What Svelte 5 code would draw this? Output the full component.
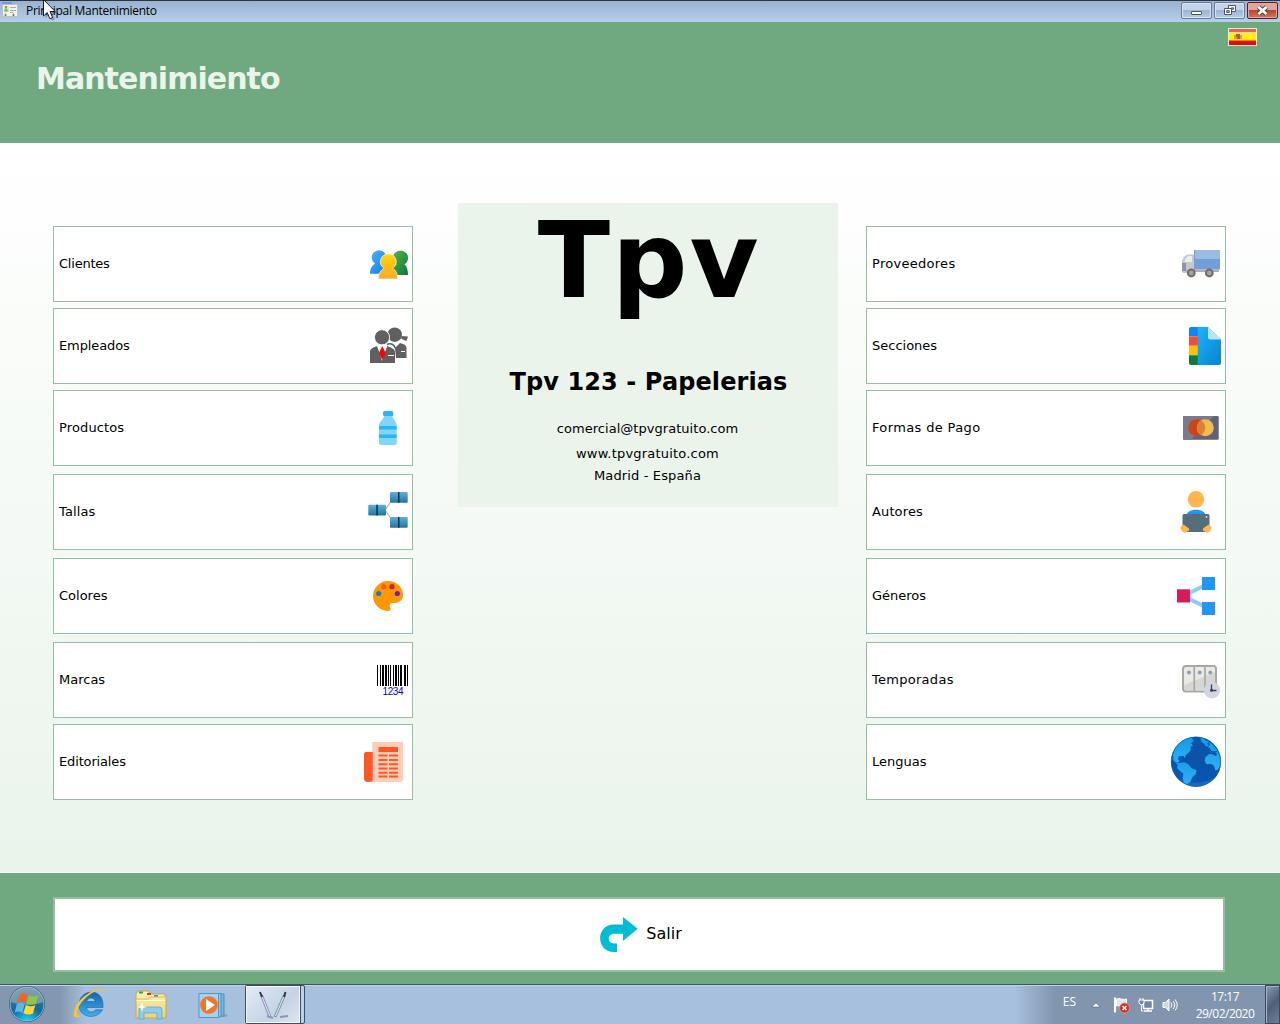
<script>
  const left = [
    { id: 'clientes', label: 'Clientes' },
    { id: 'empleados', label: 'Empleados' },
    { id: 'productos', label: 'Productos' },
    { id: 'tallas', label: 'Tallas' },
    { id: 'colores', label: 'Colores' },
    { id: 'marcas', label: 'Marcas' },
    { id: 'editoriales', label: 'Editoriales' }
  ];
  const right = [
    { id: 'proveedores', label: 'Proveedores' },
    { id: 'secciones', label: 'Secciones' },
    { id: 'pago', label: 'Formas de Pago' },
    { id: 'autores', label: 'Autores' },
    { id: 'generos', label: 'Géneros' },
    { id: 'temporadas', label: 'Temporadas' },
    { id: 'lenguas', label: 'Lenguas' }
  ];
  // [x, width] of each barcode stripe
  const bars = [[21, 1], [24, 1], [26, 2], [29, 2], [32, 1], [34, 1], [37, 1], [39, 2], [42, 1], [44, 2], [48, 2], [51, 1]];
</script>

{#snippet icon(id)}
  <svg class="icon" viewBox="0 0 56 74" width="56" height="74" aria-hidden="true">
    {#if id === 'clientes'}
      <path d="M14 46.700c0-5 2-8.500 5-10a7.300 7.300 0 1 1 8 0c3 1 5 5 5 10z" fill="url(#gBlue)" />
      <path d="M35 48c0-6 2-9 5.500-10.500a7.600 7.600 0 1 1 8 0C51 39 52 43 52 48z" fill="url(#gGreen)" />
      <path d="M22.500 52c0-6 2-8.500 5.500-10.500a8 8 0 1 1 8.500 0c4 2 5 5 5 10.500z" fill="url(#gYellow)" stroke="#fff" stroke-width=".6" />
    {:else if id === 'empleados'}
      <g fill="#606060">
        <circle cx="38.700" cy="25.700" r="7.300" />
        <path d="M45 27l7 .5-1.500 4.500-5-2zM39 39l5-5 3 1c2.500 1 3.500 2 3.500 4v10H40z" />
        <circle cx="26" cy="28.300" r="7.600" stroke="#fff" />
        <path d="M14 54V43c0-3 2-4 7-6l5 13 5-13c5 2 8 3 8 6v11z" />
      </g>
      <path d="M31 35.500c4-2 7 0 8.500 4" fill="none" stroke="#606060" stroke-width="1.500" />
      <path d="M21.500 37l4.500 15 5-15z" fill="#fff" />
      <path d="M26.300 37l3.400 7-3.400 7-3.400-7z" fill="#f00" />
      <path d="M32 46.500h6M45 42.500h4" stroke="#fff" />
    {:else if id === 'productos'}
      <path d="M28 24h8.500v2l4.200 7v18.500a2.500 2.500 0 0 1-2.500 2.500H25.500a2.500 2.500 0 0 1-2.500-2.500V33l5-7z" fill="#81d4fa" />
      <path d="M23 35h17.700v3.500H23zM23 43.500h17.700V47H23z" fill="#29b6f6" />
      <rect x="27" y="20" width="10.300" height="5" rx="1.500" fill="#29b6f6" />
    {:else if id === 'tallas'}
      <path d="M36 25l-7 10 7 10" fill="none" stroke="#bbb" stroke-width="1.300" />
      {#each [[12.3, 29.7], [34, 17], [34, 42]] as [x, y]}
        <rect {x} {y} width="17.700" height="10.700" rx="1" fill="url(#gBox)" />
        <rect x={x + 8} {y} width="1.500" height="10.700" fill="#0b3244" />
      {/each}
    {:else if id === 'colores'}
      <path d="M32 22a15 15 0 1 0 0 30c2 0 3-1 2.500-3-2-3 0-5 3-5 5 0 9.500-2.500 9.500-8C47 28 40 22 32 22z" fill="#ff9800" />
      <circle cx="27.700" cy="27.700" r="2.600" fill="#ff5722" />
      <circle cx="36" cy="27.700" r="2.600" fill="#c62828" />
      <circle cx="22.700" cy="34.500" r="2.600" fill="#1976d2" />
      <circle cx="41.300" cy="34.500" r="2.600" fill="#7b1fa2" />
    {:else if id === 'marcas'}
      {#each bars as [x, w]}
        <rect {x} y="22" width={w} height="21" />
      {/each}
      <text class="digits" x="26.500" y="52" textLength="21">1234</text>
    {:else if id === 'editoriales'}
      <path d="M16.300 17H47v37a3 3 0 0 1-3 3H12l4.300-3z" fill="#ffccbc" />
      <path d="M10 27h6.700v26.500a4.300 3.500 0 0 1-8.700 0V29a2 2 0 0 1 2-2z" fill="#ff5722" />
      <rect x="22.500" y="22" width="19.500" height="5" fill="#ff5722" />
      <path d="M22.500 30.500h9M33 30.500h9M22.500 35h9M33 35h9M22.500 39.200h9M33 39.200h9M22.500 43.500h9M33 43.500h9M22.500 47.700h9M33 47.700h9M22.500 51.500h9M33 51.500h9" stroke="#ff5722" stroke-width="2" />
    {:else if id === 'proveedores'}
      <path d="M13 45V34q2-6 6-6.500h6V46H14z" fill="#c3c9d3" />
      <path d="M15.500 35q1-5 4-6h3.500v6z" fill="#e9eeee" />
      <path d="M13 36h4v8h-4z" fill="#8c949d" />
      <path d="M25 23h26v9H25z" fill="#9bbbe3" />
      <path d="M25 32h26v10.500H25z" fill="#739fd8" />
      <path d="M17 42.500h33V45H17z" fill="#a9afbb" />
      <path d="M25.500 23v20" stroke="#7e9cc4" />
      <circle cx="22.300" cy="46" r="3.400" fill="#aaa298" stroke="#706b66" stroke-width="2" />
      <circle cx="40.300" cy="46" r="3.400" fill="#aaa298" stroke="#706b66" stroke-width="2" />
    {:else if id === 'secciones'}
      <path d="M22 18h7v9.300h-9V20a2 2 0 0 1 2-2z" fill="#0a84ff" />
      <path d="M20 27.300h9v9.500h-9z" fill="#ee4e3a" />
      <path d="M20 36.700h9v9.500h-9z" fill="#ffc107" />
      <path d="M20 46.200h9V56h-7a2 2 0 0 1-2-2z" fill="#0c7c3c" />
      <path d="M28.700 18H39l13 12.500V54a2 2 0 0 1-2 2H28.700z" fill="url(#gPage)" />
      <path d="M39 18l13 12.500H41a2 2 0 0 1-2-2z" fill="#b3e5fc" />
    {:else if id === 'pago'}
      <rect x="14" y="25" width="35.700" height="23.700" rx="1.200" fill="#62607a" />
      <path d="M15 25h30L22 48.700h-7a1 1 0 0 1-1-1V26a1 1 0 0 1 1-1z" fill="#7c7a8e" />
      <circle cx="27.700" cy="36.700" r="8.500" fill="#cc4419" />
      <circle cx="36.300" cy="36.700" r="8.500" fill="#eebd4e" />
      <path d="M32 29.400a8.500 8.500 0 0 1 0 14.600 8.500 8.500 0 0 1 0-14.600z" fill="#de8034" />
    {:else if id === 'autores'}
      <circle cx="27" cy="24.300" r="8.300" fill="#ffb74d" />
      <path d="M16.500 42c1-5 5-7.300 10.500-7.300S36.500 37 37.500 42z" fill="#2196f3" />
      <rect x="13.500" y="39" width="27" height="18" rx="1.500" fill="#546e7a" />
      <circle cx="37.500" cy="42" r="1" fill="#cfd8dc" />
      <path d="M11.500 52l3-2.500 5.500 4v2l-4 2.500-4-3zM42.500 52l-3-2.500-5.500 4v2l4 2.500 4-3z" fill="#ffb74d" />
    {:else if id === 'generos'}
      <path d="M39.500 24.500L14.500 37l25 12.500" fill="none" stroke="#90caf9" stroke-width="4" />
      <rect x="8" y="30.300" width="13" height="13.200" fill="#d81b60" />
      <rect x="33" y="18" width="13" height="13" fill="#2196f3" />
      <rect x="33" y="43" width="13" height="13" fill="#2196f3" />
    {:else if id === 'temporadas'}
      <rect x="14" y="23" width="33" height="25.500" rx="3" fill="#e9e9e6" stroke="#a9a9a1" stroke-width="2" />
      <path d="M15 42l31-13v18.500H17a2 2 0 0 1-2-2z" fill="#d6d6d2" />
      <path d="M25.300 23v25M36 23v25" stroke="#a9a9a1" stroke-width="1.700" />
      <circle cx="20" cy="29.500" r="2" fill="#8ca0b8" />
      <circle cx="30.700" cy="29.500" r="2" fill="#8ca0b8" />
      <circle cx="41.300" cy="29.500" r="2" fill="#8ca0b8" />
      <circle cx="43" cy="47.300" r="8.200" fill="#d3d6e1" />
      <path d="M42.500 41.500v6h5" fill="none" stroke="#3d3a56" stroke-width="1.300" />
      <circle cx="42.500" cy="47.300" r="1.500" fill="#3d3a56" />
    {:else if id === 'lenguas'}
      <g transform="translate(-4 5) scale(.3333)">
        <circle cx="93" cy="95" r="75" fill="url(#gSea)" />
        <path d="M33 140a75 75 0 0 0 120 0c-30 22-90 24-120 0z" fill="#2477cc" opacity=".6" />
        <path d="M62 27l18-4 6 10-8 6 6 8-9 4 3 8-8 10-8 6-2 10-4-7-14 1-4 8 6 5-4 5-8-2-5-8-3-10c2-20 14-38 38-50z" fill="url(#gLand)" />
        <path d="M20 80l10 10 8 9 20-2 12 6 10 12 15 6-3 12-10 9-6 14-12 7-7-5-4-14 2-13-9-7-10-10 2-10-14-14z" fill="url(#gLand)" />
        <path d="M106 23l10 2 8 8 8 1-6 8 6 4-8 4-6-8-8-6zM130 35l12 8 12 14 8 16 5 16-1 18-8 12-7 2-4-14-10-6-12 2-6-9 2-12 12-10 10 1 10 3 4-4-8-6-10 2-6-4 4-8-8-4 6-8z" fill="url(#gLand)" />
        <path d="M122 64l14-3 4 5 16-1M144 72l10 4" fill="none" stroke="#0a56aa" stroke-width="4" />
        <circle cx="93" cy="95" r="74" fill="none" stroke="#0a66b8" stroke-width="2" />
      </g>
    {/if}
  </svg>
{/snippet}

{#snippet column(items)}
  <nav class="column">
    {#each items as item}
      <button class="card {item.id}"><span>{item.label}</span>{@render icon(item.id)}</button>
    {/each}
  </nav>
{/snippet}

<svg class="defs" width="0" height="0" aria-hidden="true">
  <defs>
    <linearGradient id="gBlue" x2="1" y2="1"><stop stop-color="#4db4ff" /><stop offset="1" stop-color="#0878de" /></linearGradient>
    <linearGradient id="gGreen" x2="1" y2="1"><stop stop-color="#5fb64c" /><stop offset="1" stop-color="#067a3c" /></linearGradient>
    <linearGradient id="gYellow" x2="0" y2="1"><stop stop-color="#ffd51e" /><stop offset=".5" stop-color="#fdc010" /><stop offset="1" stop-color="#fba931" /></linearGradient>
    <linearGradient id="gBox" x2="0" y2="1"><stop stop-color="#5fb0dc" /><stop offset="1" stop-color="#20759f" /></linearGradient>
    <linearGradient id="gPage" x2="1" y2="1"><stop stop-color="#1fb2fb" /><stop offset=".5" stop-color="#129ae6" /><stop offset="1" stop-color="#0485cd" /></linearGradient>
    <linearGradient id="gLand" x2="0" y2="1"><stop stop-color="#109be8" /><stop offset="1" stop-color="#30b0f4" /></linearGradient>
    <radialGradient id="gSea" cx=".6" cy=".35"><stop stop-color="#0d52a8" /><stop offset="1" stop-color="#0656b0" /></radialGradient>
    <radialGradient id="gOrb" cx=".5" cy="1" r=".9"><stop stop-color="#1fd8fa" /><stop offset=".5" stop-color="#12699f" /><stop offset="1" stop-color="#4d7284" /></radialGradient>
    <linearGradient id="gFolder" x2="0" y2="1"><stop stop-color="#fdf3b0" /><stop offset="1" stop-color="#ecd271" /></linearGradient>
    <linearGradient id="gIe" x2="0" y2="1"><stop stop-color="#1763ad" /><stop offset="1" stop-color="#38b2ee" /></linearGradient>
  </defs>
</svg>

<div class="desktop">
  <div class="titlebar">
    <svg class="app-icon" width="16" height="16" viewBox="0 0 16 16">
      <rect x="0" y="0" width="10" height="3" rx="1" fill="#6f96f4" />
      <rect x=".5" y="2.500" width="15" height="12" fill="#f1f1ee" stroke="#bfc0bd" />
      <rect x="2" y="4" width="5" height="6" fill="#cdeabc" />
      <circle cx="4" cy="5" r="1" fill="#c75833" />
      <path d="M2.500 9l1.500-2.500L5.500 9z" fill="none" stroke="#5db730" />
      <path d="M8 5.500h6M8 8.500h6M8 10.500h3" stroke="#aaa" />
      <path d="M3 14v-2h1v2M11 14v-2h1v2" stroke="#999" />
    </svg>
    <span class="caption">Principal Mantenimiento</span>
    <div class="controls">
      <button class="win" aria-label="Minimizar">
        <svg width="29" height="15" viewBox="0 0 29 15"><rect x="9.500" y="8.500" width="10" height="3" rx=".5" fill="#fff" stroke="#4c566b" /></svg>
      </button>
      <button class="win" aria-label="Restaurar">
        <svg width="29" height="15" viewBox="0 0 29 15" fill="#fff" stroke="#4c566b"><path d="M13.500 2.500h7v6h-7z" /><path d="M16.500 4.800h2v1.500h-2z" fill="#a9c1de" /><path d="M9.500 5.500h7v6h-7z" /><path d="M11.700 7.700h2.500v1.800h-2.500z" fill="#a9c1de" /></svg>
      </button>
      <button class="win close" aria-label="Cerrar">
        <svg width="29" height="15" viewBox="0 0 29 15" fill="none"><path d="M10.500 4l8 7M18.500 4l-8 7" stroke="#4c4550" stroke-width="4.600" /><path d="M10.500 4l8 7M18.500 4l-8 7" stroke="#fff" stroke-width="2.600" /></svg>
      </button>
    </div>
  </div>
  <svg class="cursor" width="17" height="24" viewBox="0 0 17 24"><path d="M1.500 1v16l3.700-3.500 2.600 6.200 3-1.300L8.300 12.500h5.200z" transform="translate(1 1)" fill="#000" opacity=".25" /><path d="M.5 -.5v16.500l3.700-3.500 2.600 6.200 2.800-1.200L7 11.500h5.200z" fill="#fff" stroke="#1c1c2b" /></svg>

  <header>
    <h1>Mantenimiento</h1>
    <svg class="flag" width="29" height="18" viewBox="0 0 29 18">
      <path fill="#f6e6dc" d="M0 0h29v18H0z" /><path fill="#e8605c" d="M1 1h27v4H1z" /><path fill="#ffee10" d="M1 4h27v9H1z" /><path fill="#ffe070" d="M1 4h27v2H1z" /><path fill="#df0d0d" d="M1 12.500h27V17H1z" />
      <path fill="#e0a040" d="M6 7h8v4H6z" /><path fill="#c3533f" d="M8 6h4v3H8zM9 9h3v2H9z" />
    </svg>
  </header>

  <main>
    {@render column(left)}
    <section class="about">
      <div class="logo">Tpv</div>
      <h2>Tpv 123 - Papelerias</h2>
      <p class="mail">comercial@tpvgratuito.com</p>
      <p class="web">www.tpvgratuito.com</p>
      <p class="city">Madrid - España</p>
    </section>
    {@render column(right)}
  </main>

  <footer>
    <button class="exit">
      <svg width="38" height="36" viewBox="0 0 38 36"><path d="M23 0l14.700 11.700L23 24v-7.300h-9c-7 0-7 9.800 0 9.800h3V35h-3C-4.500 35-4.500 7.500 14 7.500h9z" fill="#00bcd4" /></svg>
      <span>Salir</span>
    </button>
  </footer>

  <div class="taskbar">
    <svg class="orb" width="40" height="38" viewBox="0 0 40 38">
      <circle cx="20" cy="19" r="17.500" fill="url(#gOrb)" stroke="#274a68" />
      <path d="M4 17a16 15 0 0 1 32 0c-9 4-23 4-32 0z" fill="#fff" opacity=".3" />
      <circle cx="20" cy="19" r="17" fill="none" stroke="#a2d4ea" stroke-width=".8" />
      <g transform="translate(-1.500 -1.500) scale(1.080)">
        <path d="M13.500 10c3-1.500 5-1 7 .3L18.300 18c-2.500-1.500-5-1.500-7.500-.3z" fill="#ee6429" />
        <path d="M21.500 11c3 1.300 6 1.300 9 0l-2.300 7.800c-3 1.200-6 1-9-.3z" fill="#8fc740" />
        <path d="M10.500 19c3-1.300 5-1 7.300.3L15.500 27c-2.500-1.300-4.500-1.300-7 0z" fill="#5fb5ec" />
        <path d="M18.800 20c3 1.300 6 1.300 8.800.2L25.300 28c-3 1-6 .8-8.800-.5z" fill="#fdd835" />
      </g>
    </svg>
    <svg class="ie" width="34" height="34" viewBox="0 0 34 34">
      <path d="M31 20.500H14.500c.6 5 7 6 9 2.300h7C25 33.500 6.500 31 7 17.500 7.500 2 30.500 0 31 17.500zM14.700 14.500h8.600c-1-4.700-7.600-4.700-8.600 0z" fill="url(#gIe)" stroke="#125698" stroke-width=".5" />
      <path d="M32 8c1.500-7-3-7.500-9-5C13 6.500 4 16 2 24c-1.500 7 2.500 8 8 4.500-4 1-6-1-4.500-5.500C8 15.500 16 7.500 24 4c5.500-2 8.500-1 8 4z" fill="#f8c52c" />
    </svg>
    <svg class="folder" width="34" height="32" viewBox="0 0 34 32">
      <path d="M2 4l2-3h10l2 3h14l2 3v21H2z" fill="url(#gFolder)" stroke="#c9a94d" />
      <path d="M5 1.500h4v2H5z" fill="#23a64a" /><path d="M13 3h4v2h-4z" fill="#d83b2d" /><path d="M20 5h4v2h-4z" fill="#2899ea" />
      <path d="M2 9h12l3-2h15" fill="none" stroke="#d9bd68" /><path d="M2.500 10.500h29" stroke="#fffbe0" />
      <path d="M5 29V20q0-3 3-3h17q3 0 3 3v9h-5v-6H10v6z" fill="#8dccee" stroke="#5b9ec9" stroke-width=".7" />
      <path d="M8 12l1 4 4 1-4 1-1 4-1-4-4-1 4-1z" fill="#fff" />
    </svg>
    <svg class="media" width="32" height="28" viewBox="0 0 32 28">
      <path d="M8 25h20l2-2-4-1z" fill="#62748b" opacity=".4" />
      <path d="M6 2h20v22H6z" fill="#76b6da" stroke="#4d93ba" /><path d="M3 1.500h20v23.500H3z" fill="#8fc8e6" stroke="#4d93ba" /><path d="M1 1.500h19.500V25.500H1z" fill="#a3d3ec" stroke="#5698bd" />
      <circle cx="11" cy="13" r="8.800" fill="#f4752a" /><path d="M8 7v12l9-6z" fill="#fff" />
    </svg>
    <div class="task-stack">
      <div class="task">
        <svg width="32" height="32" viewBox="0 0 32 32" fill="none">
          <path d="M16 28l-6-2M23 27l8-1" stroke="#8b99ab" stroke-width="2" />
          <path d="M4.500 5l8.500 22" stroke="#8f92b8" stroke-width="3" /><path d="M4.800 6l8 20" stroke="#e7e8fb" stroke-width="1" /><path d="M3 2l2 5" stroke="#3c3440" stroke-width="2" />
          <path d="M27.500 5L18 27" stroke="#7e9aa0" stroke-width="3" /><path d="M27 6l-8.500 20" stroke="#dcf2ef" stroke-width="1" /><path d="M28.500 2l-1.500 5" stroke="#3c3440" stroke-width="2" />
        </svg>
      </div>
    </div>
    <div class="tray">
      <span class="lang">ES</span>
      <svg class="up" width="10" height="6" viewBox="0 0 10 6"><path d="M.8 5L5 .8 9.200 5z" fill="#fff" stroke="#51617a" stroke-width=".6" /></svg>
      <svg class="alert" width="17" height="17" viewBox="0 0 17 17"><path d="M2 .5v15" stroke="#fff" stroke-width="2" /><path d="M3.500 2c4-1.500 5 1.500 10 0v7c-4 1-6-1-10 0z" fill="#dfe6ee" stroke="#fff" /><circle cx="11.500" cy="11" r="5" fill="#dd2d23" stroke="#f4a59c" stroke-width=".6" /><path d="M9.500 9l4 4M13.500 9l-4 4" stroke="#fff" stroke-width="1.500" /></svg>
      <svg class="net" width="17" height="16" viewBox="0 0 17 16" fill="none"><path d="M5.500 3.500h9v8h-9z" fill="#7187a2" stroke="#fff" stroke-width="1.500" /><path d="M6 14h8M10 12v2" stroke="#fff" stroke-width="1.500" /><path d="M1 3h5v3L4 8H3L1 6zM2 1v2M5 1v2M3.500 8v6h2" fill="#7187a2" stroke="#fff" /></svg>
      <svg class="sound" width="16" height="16" viewBox="0 0 16 16" fill="none" stroke="#fff"><path d="M1 5.500h2.500L7 2v12l-3.500-3.500H1z" fill="#cdd6e1" /><path d="M9 5.500q2 2.500 0 5M11 4q3.500 4 0 8M13 2.500q4.500 5.500 0 11" /></svg>
      <div class="clock"><span>17:17</span><span>29/02/2020</span></div>
      <div class="peek"></div>
    </div>
  </div>
</div>

<style>
  :global(body) { margin: 0; }
  .defs { position: absolute; }
  .desktop {
    position: relative;
    width: 1280px;
    height: 1024px;
    display: flex;
    flex-direction: column;
    overflow: hidden;
    font-family: 'DejaVu Sans', sans-serif;
    color: #000;
  }
  svg { display: block; flex: none; }
  button { font: inherit; color: inherit; padding: 0; margin: 0; }

  .titlebar {
    height: 22px;
    box-sizing: border-box;
    border-top: 1px solid #30353c;
    background: linear-gradient(#97b1d0, #b6d0ea);
    display: flex;
    align-items: flex-start;
    padding: 1px 2px 0;
  }
  .caption {
    font: 12px/17px 'Open Sans', sans-serif;
    letter-spacing: -0.29px;
    margin-left: 8px;
  }
  .controls { display: flex; gap: 2px; margin-left: auto; }
  .win {
    width: 31px;
    height: 17px;
    border: 1px solid #667c98;
    border-radius: 2px;
    background: linear-gradient(#c3d4e8 0 45%, #9bb5d3 50%, #b7cde6);
    box-shadow: inset 0 0 0 1px #d5e3f3;
  }
  .close {
    border-color: #551f26;
    background: linear-gradient(#e0a598 0 45%, #b9452f 50%, #d07b62);
    box-shadow: inset 0 0 0 1px #e0a9a0;
  }
  .cursor { position: absolute; left: 43px; top: 0; }

  header {
    height: 121px;
    background: #70a880;
    display: flex;
    justify-content: space-between;
    align-items: flex-start;
  }
  h1 {
    margin: 38px 0 0 36px;
    font-size: 30px;
    line-height: 38px;
    letter-spacing: -0.95px;
    color: #eaf4eb;
  }
  .flag { margin: 6px 23px 0 0; }

  main {
    height: 730px;
    box-sizing: border-box;
    padding: 60px 54px 0 53px;
    display: flex;
    justify-content: space-between;
    align-items: flex-start;
    background: linear-gradient(#fff, #eaf4eb);
    border-bottom: 1px solid #fff;
  }
  .column {
    width: 360px;
    padding-top: 23px;
    display: flex;
    flex-direction: column;
    gap: 6px;
  }
  .card {
    height: 76px;
    box-sizing: border-box;
    border: 1px solid #95bfa0;
    background: #fff;
    display: flex;
    align-items: center;
    justify-content: space-between;
    padding-left: 5px;
    font-size: 13px;
  }
  .card span { padding-bottom: 2px; }
  .tallas, .colores, .marcas, .autores, .generos, .temporadas { margin-top: 2px; }
  .clientes { letter-spacing: -0.22px; }
  .empleados { letter-spacing: -0.1px; }
  .productos, .tallas, .autores { letter-spacing: 0.13px; }
  .editoriales { letter-spacing: -0.15px; }
  .proveedores, .temporadas { letter-spacing: 0.28px; }
  .pago { letter-spacing: 0.36px; }
  .digits { font: 10px 'Liberation Sans', sans-serif; fill: #0000d0; }

  .about {
    width: 380px;
    height: 304px;
    margin-left: 16px;
    background: #eaf4eb;
    display: flex;
    flex-direction: column;
    align-items: center;
    white-space: nowrap;
  }
  .logo { font-size: 106px; font-weight: bold; line-height: 124px; letter-spacing: 1.8px; margin: -4px 0 0 3px; }
  h2 { margin: 44px 0 0 2px; font-size: 24px; line-height: 30px; letter-spacing: 0.1px; }
  p { margin: 0; font-size: 13px; line-height: 22px; }
  .mail { margin-top: 21px; letter-spacing: 0.04px; }
  .web { margin-top: 3px; letter-spacing: 0.2px; }
  .city { letter-spacing: 0.14px; }

  footer {
    height: 111px;
    box-sizing: border-box;
    background: #70a880;
    padding: 24px 55px 12px 53px;
    display: flex;
  }
  .exit {
    flex: 1;
    border: 2px solid #95bfa0;
    background: #fff;
    display: flex;
    align-items: center;
    justify-content: center;
    gap: 8px;
    font-size: 16px;
    padding-left: 4px;
  }
  .exit span { padding-bottom: 2px; }

  .taskbar {
    height: 40px;
    box-sizing: border-box;
    border-top: 1px solid #3f5566;
    box-shadow: inset 0 1px #c2d2e4;
    background: linear-gradient(90deg, #8497b0 0 60px, #a7c0de 85px 1015px, #8195ae 1055px);
    display: flex;
    align-items: flex-start;
  }
  .orb { margin: 0 0 0 7px; }
  .ie { margin: 2px 0 0 25px; }
  .folder { margin: 5px 0 0 28px; }
  .media { margin: 7px 0 0 30px; }
  .task-stack {
    margin-left: 15px;
    width: 60px;
    height: 39px;
    box-sizing: border-box;
    border: 1px solid #3d4e63;
    border-radius: 2px;
    background: #bfd0e4;
  }
  .task {
    width: 54px;
    height: 37px;
    box-sizing: border-box;
    border: 1px solid #f4f8fc;
    box-shadow: 1px 0 #3d4e63;
    background: linear-gradient(135deg, #e3ebf5, #c4d3e6 60%, #dbe5f1);
    display: flex;
    justify-content: center;
    padding-top: 3px;
  }
  .tray {
    margin-left: auto;
    height: 39px;
    display: flex;
    align-items: flex-start;
    color: #fff;
    font: 12px/17px 'Open Sans', sans-serif;
  }
  .lang { margin: 8px 15px 0 0; }
  .up { margin: 17px 12px 0 0; }
  .alert { margin: 12px 8px 0 0; }
  .net { margin: 12px 7px 0 0; }
  .sound { margin: 12px 17px 0 0; }
  .clock {
    width: 60px;
    margin: 3px 10px 0 0;
    display: flex;
    flex-direction: column;
    align-items: center;
    letter-spacing: -0.5px;
  }
  .peek {
    width: 15px;
    height: 39px;
    box-sizing: border-box;
    border: 1px solid #3a4a5c;
    box-shadow: inset 1px 1px #a3b3c5;
    background: linear-gradient(135deg, #8a9bb0, #4f6074 50%, #6d8096);
  }
</style>
